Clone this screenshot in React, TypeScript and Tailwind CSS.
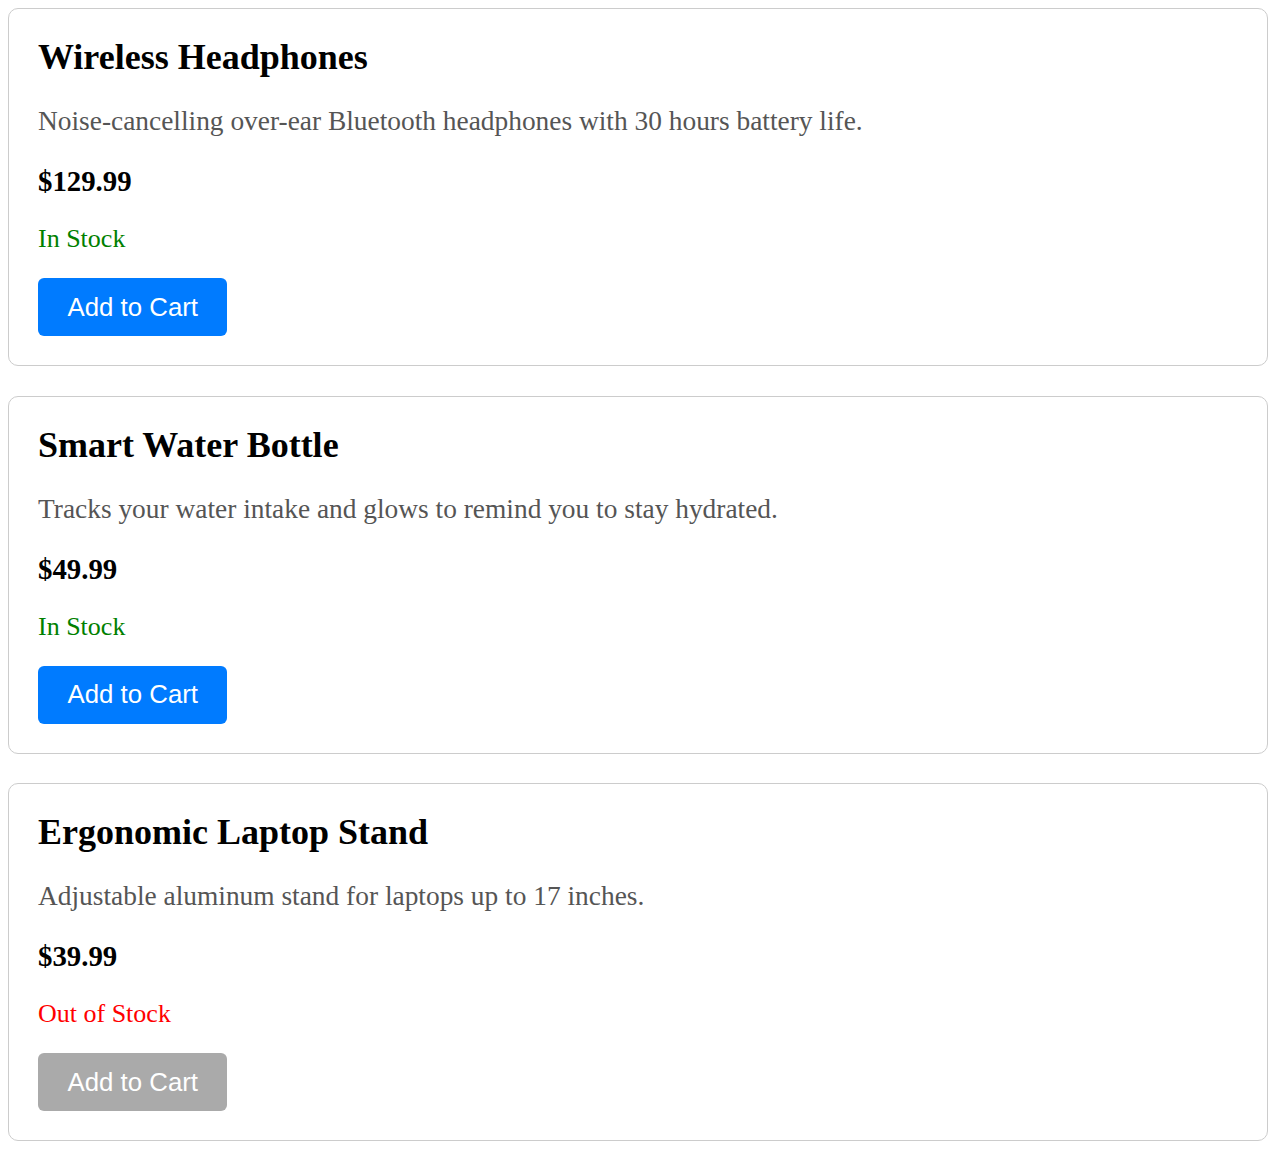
import React from "react";

type Product = {
  name: string;
  desc: string;
  price: string;
  inStock: boolean;
};

const products: Product[] = [
  {
    name: "Wireless Headphones",
    desc: "Noise-cancelling over-ear Bluetooth headphones with 30 hours battery life.",
    price: "$129.99",
    inStock: true,
  },
  {
    name: "Smart Water Bottle",
    desc: "Tracks your water intake and glows to remind you to stay hydrated.",
    price: "$49.99",
    inStock: true,
  },
  {
    name: "Ergonomic Laptop Stand",
    desc: "Adjustable aluminum stand for laptops up to 17 inches.",
    price: "$39.99",
    inStock: false,
  },
];

function Card({ p }: { p: Product }) {
  return (
    <div className="flex flex-col items-start border border-[#cccccc] rounded-[10px] bg-white pt-[30px] pb-[29px] px-[29px] font-['Liberation_Serif',serif]">
      <h2 className="text-[36px] leading-[36px] font-bold text-black m-0">{p.name}</h2>
      <p className="mt-[33px] text-[27.4px] leading-[27px] text-[#555555]">{p.desc}</p>
      <p className="mt-[32px] text-[28.8px] leading-[29px] font-bold text-black">{p.price}</p>
      <p
        className={
          p.inStock
            ? "mt-[30px] text-[26px] leading-[26px] text-[#008000]"
            : "mt-[30px] text-[26px] leading-[26px] text-[#ff0000]"
        }
      >
        {p.inStock ? "In Stock" : "Out of Stock"}
      </p>
      <button
        disabled={!p.inStock}
        className={
          p.inStock
            ? "mt-[26px] h-[58px] px-[29.5px] rounded-[6px] bg-[#007bff] text-white text-[25.8px] font-['Liberation_Sans',Arial,sans-serif]"
            : "mt-[26px] h-[58px] px-[29.5px] rounded-[6px] bg-[#aaaaaa] text-white text-[25.8px] font-['Liberation_Sans',Arial,sans-serif]"
        }
      >
        Add to Cart
      </button>
    </div>
  );
}

export default function App() {
  return (
    <div className="bg-white min-h-[1152px] pl-[8px] pr-[10px] pt-[8px] pb-[12px] flex flex-col gap-[29.5px]">
      {products.map((p) => (
        <Card key={p.name} p={p} />
      ))}
    </div>
  );
}
